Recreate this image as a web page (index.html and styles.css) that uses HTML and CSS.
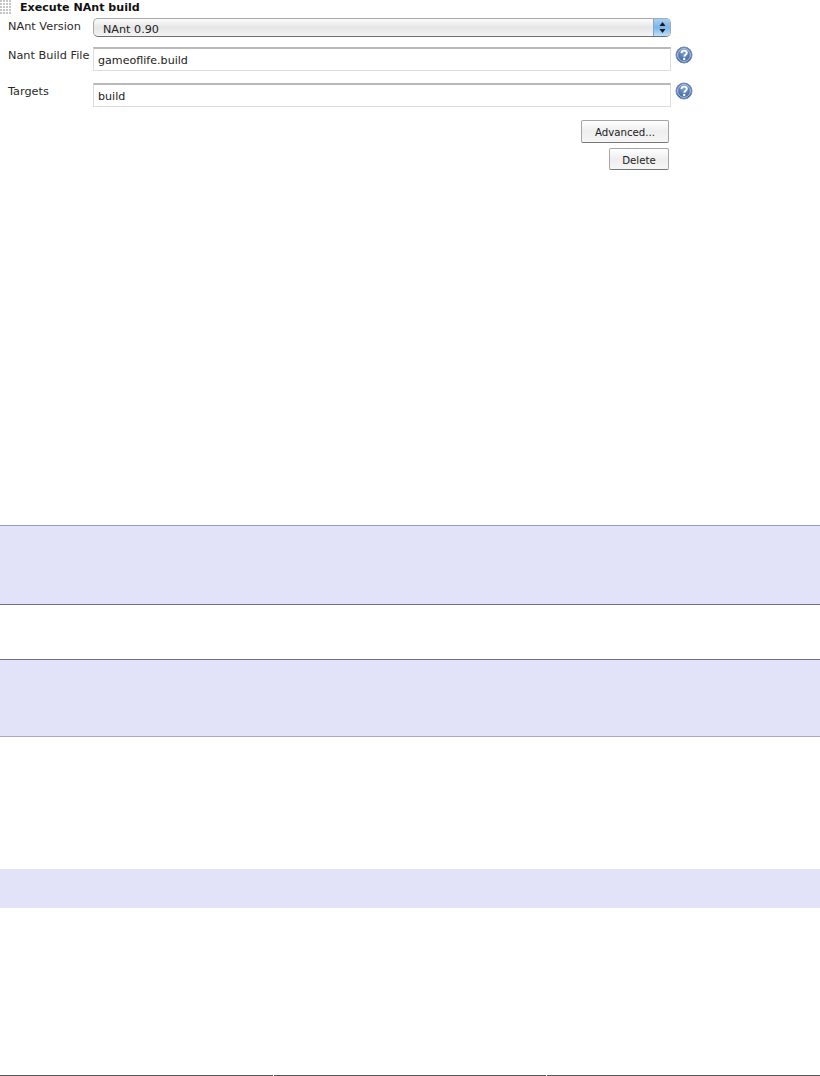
FILE: index.html
```html
<!DOCTYPE html>
<html lang="en">
<head>
<meta charset="utf-8">
<title>Execute NAnt build</title>
<link rel="stylesheet" href="styles.css">
</head>
<body>
<section class="builder">
  <div class="heading">
    <span class="grip"></span>
    <span class="title">Execute NAnt build</span>
  </div>
  <div class="form">
    <label class="label label-version">NAnt Version</label>
    <div class="select">
      <span class="select-text">NAnt 0.90</span>
      <span class="select-arrows">
        <svg width="9" height="13" viewBox="0 0 9 13"><path d="M4.5 1 7.5 5H1.5Z" fill="#1a1a1a"/><path d="M4.5 12 1.5 8H7.5Z" fill="#1a1a1a"/></svg>
      </span>
    </div>
    <span></span>
    <label class="label label-file">Nant Build File</label>
    <div class="input input-file">gameoflife.build</div>
    <svg class="help help-file" width="18" height="18" viewBox="0 0 18 18"><use href="#q"/></svg>
    <label class="label label-targets">Targets</label>
    <div class="input input-targets">build</div>
    <svg class="help help-targets" width="18" height="18" viewBox="0 0 18 18"><use href="#q"/></svg>
  </div>
  <div class="actions">
    <button class="btn btn-advanced">Advanced...</button>
    <button class="btn btn-delete">Delete</button>
  </div>
</section>
<div class="band band-one"></div>
<div class="band band-two"></div>
<div class="band band-three"></div>
<div class="rule">
  <span></span><span></span><span></span>
</div>
<svg class="defs" width="0" height="0">
  <defs>
    <radialGradient id="orb" cx="50%" cy="35%" r="70%">
      <stop offset="0" stop-color="#7f9fcf"/>
      <stop offset="1" stop-color="#31579b"/>
    </radialGradient>
    <g id="q">
      <circle cx="9" cy="9" r="8" fill="url(#orb)" stroke="#6f8bb8"/>
      <circle cx="9" cy="9" r="6.4" fill="none" stroke="#c3d3ea" stroke-width=".9"/>
      <path d="M6.4 7.1C6.5 5.4 7.6 4.6 9.1 4.6 10.7 4.6 11.8 5.5 11.8 6.9 11.8 8.6 9.4 8.8 9.3 10.6" fill="none" stroke="#fff" stroke-width="1.9"/>
      <circle cx="9.2" cy="12.9" r="1.2" fill="#fff"/>
    </g>
  </defs>
</svg>
</body>
</html>
```
FILE: styles.css
```css
* { box-sizing: border-box; }
html, body { margin: 0; padding: 0; background: #fff; }
body {
  height: 1076px;
  overflow: hidden;
  font-family: "DejaVu Sans", sans-serif;
  font-size: 11px;
  color: #222;
}
.builder { height: 525px; }
.heading {
  display: flex;
  align-items: center;
  height: 15px;
  gap: 8px;
}
.grip {
  width: 12px;
  height: 15px;
  background-image: radial-gradient(circle at 1px 1px, #c4c4c4 1px, transparent 1px);
  background-size: 3px 3px;
}
.title { font-weight: bold; font-size: 11.1px; color: #111; }
.form {
  display: grid;
  grid-template-columns: 93px 578px 26px;
  grid-template-rows: 19px 34px 36px;
  margin-top: 3px;
}
.label { padding-left: 8px; white-space: nowrap; font-size: 11.3px; color: #2a2a2a; }
.label-version { padding-top: 2px; }
.label-file { padding-top: 2px; margin-top: 10px; }
.label-targets { padding-top: 2px; margin-top: 12px; }
.select {
  display: flex;
  justify-content: space-between;
  align-items: center;
  height: 19px;
  border: 1px solid #a9a9a9;
  border-bottom-color: #707070;
  border-radius: 5px;
  background: linear-gradient(#fbfbfb, #e6e6e6 50%, #f4f4f4);
  overflow: hidden;
}
.select-text { padding-left: 9px; padding-top: 3px; font-size: 11.2px; color: #222; }
.select-arrows {
  display: flex;
  align-items: center;
  justify-content: center;
  width: 17px;
  height: 100%;
  background: linear-gradient(#a6cff5, #78b6ee 50%, #bfe0fb);
  border-left: 1px solid #8aa5c9;
}
.input {
  height: 24px;
  padding: 5px 0 0 4px;
  border: 1px solid #dcdcdc;
  border-top: 2px solid #b9b9b9;
  background: #fff;
  font-size: 11.1px;
  color: #222;
}
.input-file { margin-top: 10px; }
.input-targets { margin-top: 12px; }
.help { margin-left: 4px; }
.help-file { margin-top: 9px; }
.help-targets { margin-top: 11px; }
.actions {
  display: flex;
  flex-direction: column;
  align-items: flex-end;
  gap: 5px;
  width: 669px;
  margin-top: 13px;
}
.btn {
  font-family: inherit;
  font-size: 10.2px;
  color: #222;
  border: 1px solid #a5a5a5;
  border-bottom-color: #777;
  border-radius: 2px;
  background: linear-gradient(#fff, #eee 50%, #f6f6f6);
  padding: 2px 0 0;
}
.btn-advanced { width: 88px; height: 23px; }
.btn-delete { width: 60px; height: 22px; }
.band { background: #e2e2f8; }
.band-one {
  height: 80px;
  border-top: 1px solid #9a9ac4;
  border-bottom: 1px solid #6f6f8f;
}
.band-two {
  height: 78px;
  margin-top: 54px;
  border-top: 1px solid #6f6f8f;
  border-bottom: 1px solid #a8a8c8;
}
.band-three {
  height: 39px;
  margin-top: 132px;
}
.rule {
  display: grid;
  grid-template-columns: 273px 272px 1fr;
  column-gap: 1px;
  margin-top: 167px;
}
.rule span { height: 1px; background: #555; }
.defs { position: absolute; }
```
